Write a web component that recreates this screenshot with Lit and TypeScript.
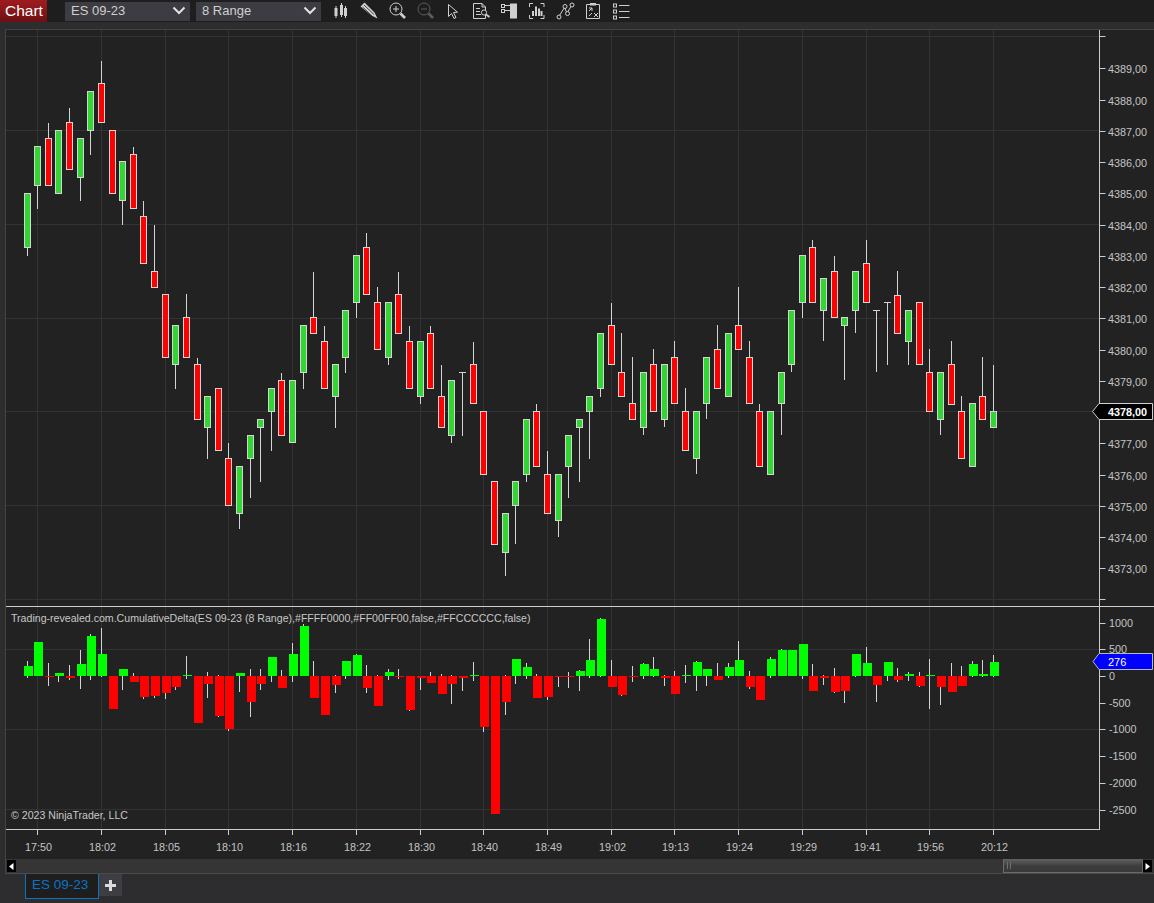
import { LitElement, html, svg, css } from "lit";
import { customElement } from "lit/decorators.js";

// [color, wickTop, bodyTop, bodyBottom, wickBottom]  0 = no wick
type C = [string, number, number, number, number];
const G = "g", R = "r";
const candles: C[] = [
  [G,0,193,247,256],[G,0,146,185,209],[R,123,138,185,0],[G,0,130,193,0],[R,108,122,169,0],[G,0,138,177,201],[G,0,91,130,155],[R,61,83,122,0],
  [R,0,130,193,0],[G,0,161,200,225],[R,147,154,208,0],[R,201,216,263,0],[R,225,271,287,0],[R,0,294,357,0],[G,0,325,364,389],[R,294,317,357,0],
  [R,358,364,419,0],[G,0,396,427,459],[R,0,388,450,0],[R,443,458,505,0],[G,0,466,513,529],[G,0,435,458,498],[G,0,419,427,482],[G,0,388,411,451],
  [R,373,380,435,0],[G,0,380,442,0],[G,0,325,372,389],[R,272,317,333,0],[R,326,341,388,0],[G,0,364,396,428],[G,0,310,357,373],[G,0,255,302,318],
  [R,233,247,294,0],[R,287,302,349,0],[G,0,302,357,365],[R,272,294,333,0],[R,326,341,388,0],[G,0,341,396,404],[R,326,333,388,0],[R,365,396,427,0],
  [G,0,380,435,443],[G,0,372,372,436],[R,342,364,403,0],[R,0,411,474,0],[R,0,481,544,0],[G,0,513,552,576],[G,0,481,505,544],[G,0,419,474,482],
  [R,404,411,466,0],[R,451,474,513,0],[G,0,474,520,537],[G,0,435,466,498],[G,0,419,427,482],[G,0,396,411,459],[G,0,333,388,397],[R,303,325,364,0],
  [R,333,372,396,0],[R,357,403,419,0],[G,0,372,427,435],[R,349,364,411,0],[G,0,364,419,427],[R,341,357,403,0],[R,388,411,450,0],[G,0,411,458,474],
  [G,0,357,403,419],[R,325,349,388,0],[G,0,333,396,0],[R,287,325,349,0],[R,341,357,403,0],[R,404,411,466,0],[G,0,411,474,0],[G,0,372,403,435],
  [G,0,310,364,372],[G,0,255,302,318],[R,240,247,302,0],[G,0,278,310,341],[R,256,271,317,0],[G,0,317,325,380],[G,0,271,310,333],[R,240,263,302,0],
  [G,0,310,310,372],[G,0,302,302,365],[R,271,295,333,0],[G,0,310,341,365],[R,0,302,364,0],[R,349,372,411,0],[G,0,372,419,435],[R,341,364,404,0],
  [R,396,411,458,0],[G,0,403,466,0],[R,357,396,419,0],[G,365,411,427,0],
];

// [barEnd y, wickTop, wickBottom]; color follows side of the zero line
type D = [number, number, number];
const deltas: D[] = [
  [666,661,678],[642,0,0],[677,663,686],[673,0,682],[678,665,680],[664,650,689],[636,634,680],[654,628,677],
  [709,0,0],[669,0,690],[682,673,0],[697,0,699],[696,0,698],[693,0,699],[687,0,690],[675,656,679],
  [723,0,0],[684,672,698],[716,675,717],[729,0,731],[673,0,692],[702,669,717],[684,669,690],[657,0,682],
  [688,670,0],[654,643,682],[626,624,0],[698,661,0],[715,0,0],[685,675,693],[661,0,679],[655,654,0],
  [688,665,693],[706,675,0],[672,669,680],[677,669,679],[710,0,711],[678,0,690],[683,672,0],[694,674,0],
  [684,675,704],[678,0,691],[675,662,681],[727,0,732],[814,0,0],[702,675,715],[659,0,684],[667,663,679],
  [698,674,0],[697,0,700],[677,0,687],[677,672,688],[671,670,691],[660,639,678],[619,618,677],[687,660,0],
  [695,0,696],[677,666,682],[664,663,679],[669,657,677],[678,675,686],[694,671,0],[675,665,683],[662,661,691],
  [669,0,686],[680,663,0],[667,663,678],[660,641,0],[687,671,689],[700,0,0],[659,657,678],[650,649,0],
  [650,0,0],[644,0,679],[691,664,0],[678,675,685],[692,668,693],[691,0,703],[654,0,677],[663,647,0],
  [685,0,702],[662,0,681],[680,668,682],[674,672,681],[686,672,687],[675,659,709],[687,0,705],[692,663,0],
  [686,666,0],[664,661,677],[674,660,677],[662,655,677],
];

const left = (i: number) => Math.round(23.6 + 10.62 * i);
const Z = 676;
const hGridPrice = [36, 130, 224, 318, 411, 505, 599];
const hGridDelta = [649, 729, 809];
const times = ["17:50","18:02","18:05","18:10","18:16","18:22","18:30","18:40","18:49","19:02","19:13","19:24","19:29","19:41","19:56","20:12"];
const gridXs = times.map((_, k) => left(1 + 6 * k) + 3);
const priceLabels = Array.from({ length: 17 }, (_, k) => 4389 - k);
const priceY = (p: number) => Math.round(37 + (4390 - p) * 31.25);
const deltaLabels = [1000, 500, 0, -500, -1000, -1500, -2000, -2500];
const deltaY = (v: number) => Math.round(676 - v * 0.05347);

const vgrid = (y1: number, y2: number) =>
  gridXs.map((x) => svg`<line class="grid" x1=${x + 0.5} x2=${x + 0.5} y1=${y1} y2=${y2}></line>`);
const hgrid = (ys: number[]) =>
  ys.map((y) => svg`<line class="grid" x1="6" x2="1099" y1=${y + 0.5} y2=${y + 0.5}></line>`);

const icons = [
  svg`<g class="ic"><path d="M5 6v12M10.5 3v14M14.5 6v12"></path><rect class="f" x="3.5" y="8" width="3" height="8"></rect><rect class="f" x="9" y="5" width="3" height="10"></rect><rect class="f" x="13" y="8" width="3" height="8"></rect></g>`,
  svg`<g class="ic"><path class="f" d="M1.5 6.5 5.5 2.5 15.5 12.5 18.5 18.5 12.5 15.5Z"></path><path class="dk" d="M5 5 15 14.5M3.5 7 13 16"></path></g>`,
  svg`<g class="ic"><circle cx="9" cy="9" r="6"></circle><path d="M9 6v6M6 9h6"></path><path class="hd" d="M13.5 13.5 18 18"></path></g>`,
  svg`<g class="ic dim"><circle cx="9" cy="9" r="6"></circle><path d="M6 9h6"></path><path class="hd" d="M13.5 13.5 18 18"></path></g>`,
  svg`<g class="ic"><path d="M5.5 4.5v12l3-3 2.5 5 2-1-2.5-5 4-.3Z"></path></g>`,
  svg`<g class="ic"><path d="M2.5 3.5H11L14.5 7V18.5H2.5ZM11 3.5V7h3.5M5 8.5h4M5 11.5h4M5 14.5h5"></path><circle class="bgc" cx="13" cy="12.5" r="2.6"></circle><path class="hd2" d="M15 14.5 18.5 17"></path></g>`,
  svg`<g class="ic"><rect class="f" x="11" y="3.5" width="7" height="15"></rect><rect x="2.5" y="4.5" width="3" height="3"></rect><rect x="2.5" y="9.5" width="3" height="3"></rect><path d="M5.5 5.5H11M5.5 10.5H11"></path></g>`,
  svg`<g class="ic"><path d="M2.5 7V3.5H6M13.5 3.5H17V7M2.5 15V18.5H6M13.5 18.5H17V15"></path><path class="b2" d="M6 16V11M9 16V6.5M12 16V8.5M14.5 16V11"></path></g>`,
  svg`<g class="ic"><path d="M4.5 15.5 9.5 7.5 12 13 16 6.5"></path><circle class="bgc" cx="4" cy="17" r="2"></circle><circle class="bgc" cx="10" cy="6.5" r="2"></circle><circle class="bgc" cx="12.5" cy="13.5" r="2"></circle><circle class="bgc" cx="17" cy="5" r="2"></circle></g>`,
  svg`<g class="ic"><path d="M7 4.5H3.5V18.5H16.5V4.5H13"></path><rect class="f" x="7" y="3" width="6" height="2.5"></rect><path d="M6 11 9 8M6 8h3v3M11 13l4 4M15 13l-4 4M6 16l3-3"></path></g>`,
  svg`<g class="ic"><rect x="2.5" y="4" width="3" height="3"></rect><rect x="2.5" y="10" width="3" height="3"></rect><rect x="2.5" y="16" width="3" height="3"></rect><path d="M8 5.5H18.5M8 11.5H18.5M8 17.5H18.5"></path></g>`,
];

@customElement("app-root")
export class AppRoot extends LitElement {
  static styles = css`
    :host { display: block; width: 1154px; height: 903px; background: #2d2d30; font-family: "Liberation Sans", Arial, sans-serif; overflow: hidden; }
    .toolbar { display: flex; align-items: center; height: 22px; background: #1e1e1e; }
    .chart-tab { width: 47px; height: 22px; box-sizing: border-box; padding-left: 5px; line-height: 21px; font-size: 15.5px; color: #fff; background: linear-gradient(#9e1c20, #6e1013); }
    .select { display: flex; align-items: center; justify-content: space-between; box-sizing: border-box; width: 125px; height: 19px; padding: 0 4px 1px 6px; margin-right: 6px; background: #3c3c42; color: #cfcfcf; font-size: 13px; }
    .select svg { display: block; }
    .chev { fill: none; stroke: #e2e2e2; stroke-width: 2; }
    .first { margin-left: 18px; }
    .icons { display: flex; }
    .icon { display: block; width: 28px; height: 22px; }
    .ic { fill: none; stroke: #cfcfcf; stroke-width: 1; }
    .ic .f { fill: #cfcfcf; stroke: none; }
    .ic .dk { stroke: #444; }
    .ic .hd { stroke-width: 2.6; }
    .ic .hd2 { stroke-width: 1.8; }
    .ic .b2 { stroke-width: 2; }
    .ic .bgc { fill: #1e1e1e; }
    .ic.dim { stroke: #5c5c5c; }
    .band { height: 7px; }
    .frame { margin-left: 5px; border-left: 1px solid #434343; border-top: 1px solid #434343; background: #222222; }
    .frame svg { display: block; }
    text { font-family: "Liberation Sans", Arial, sans-serif; }
    .grid { stroke: #333333; stroke-width: 1; }
    .axis { stroke: #cdcdcd; stroke-width: 1; fill: none; }
    .lbl { font-size: 10.8px; fill: #c4c4c4; }
    .title { font-size: 10.6px; fill: #c8c8c8; }
    .wick { stroke: #d4d4d4; stroke-width: 1; }
    .cg { fill: #32d632; stroke: #d4d4d4; stroke-width: 1; }
    .cr { fill: #ff0000; stroke: #d4d4d4; stroke-width: 1; }
    .bg { fill: #00ff00; }
    .br { fill: #ff0000; }
    .mark { fill: #000; stroke: #d0d0d0; stroke-width: 1; }
    .markb { fill: #0000ff; stroke: #b8b8b8; stroke-width: 1; }
    .mt { font-size: 10.8px; fill: #fff; font-weight: bold; }
    .mw { font-size: 11px; fill: #fff; }
    .scroll { display: flex; align-items: stretch; box-sizing: border-box; height: 15px; margin-left: 5px; background: #353535; border-left: 1px solid #434343; border-bottom: 1px solid #4a4a4a; padding: 0 2px 0 1px; }
    .arrow { width: 9px; margin: 1px 0; background: #000; display: flex; align-items: center; justify-content: center; }
    .arrow svg { display: block; }
    .spacer { flex: 1; }
    .thumb { width: 140px; box-sizing: border-box; border: 1px solid #6a6a6a; border-top: none; background: linear-gradient(#626262, #3c3c3c 55%, #3a3a3a); display: flex; gap: 2px; padding: 3px 3px; }
    .thumb i { width: 1px; background: #6e6e6e; }
    .tabs { display: flex; align-items: flex-start; padding-left: 25px; }
    .tab { box-sizing: border-box; width: 74px; height: 25px; padding-left: 6px; line-height: 22px; font-size: 13.5px; color: #0a74c4; background: #1e1e1e; border: 1px solid #0a74c4; border-top: none; }
    .plus { width: 23px; height: 22px; background: #3e3e42; display: flex; align-items: center; justify-content: center; }
    .plus svg { display: block; }
  `;

  render() {
    return html`
      <div class="toolbar">
        <div class="chart-tab">Chart</div>
        <div class="select first">ES 09-23${this.chev()}</div>
        <div class="select">8 Range${this.chev()}</div>
        <div class="icons">
          ${icons.map((g) => html`<svg class="icon" viewBox="-4 0 28 22">${g}</svg>`)}
        </div>
      </div>
      <div class="band"></div>
      <div class="frame">
        ${this.pricePanel()}
        ${this.deltaPanel()}
        ${this.timeAxis()}
      </div>
      <div class="scroll">
        <div class="arrow"><svg width="5" height="7"><path d="M4.5 0V7L0 3.5Z" fill="#fff"></path></svg></div>
        <div class="spacer"></div>
        <div class="thumb"><i></i><i></i></div>
        <div class="arrow"><svg width="5" height="7"><path d="M.5 0V7L5 3.5Z" fill="#fff"></path></svg></div>
      </div>
      <div class="tabs">
        <div class="tab">ES 09-23</div>
        <div class="plus"><svg width="11" height="11"><path d="M0 4h11v3H0ZM4 0h3v11H4Z" fill="#dcdcdc"></path></svg></div>
      </div>
    `;
  }

  chev() {
    return html`<svg width="14" height="10"><path class="chev" d="M1.5 1.5 7 7 12.5 1.5"></path></svg>`;
  }

  pricePanel() {
    return html`<svg width="1148" height="577" viewBox="6 30 1148 577">
      ${vgrid(30, 606)}
      ${hgrid(hGridPrice)}
      ${candles.map((c, i) => {
        const x = left(i);
        const body = c[2] === c[3]
          ? svg`<line class="wick" x1=${x} x2=${x + 7} y1=${c[2] + 0.5} y2=${c[2] + 0.5}></line>`
          : svg`<rect class=${c[0] === G ? "cg" : "cr"} x=${x + 0.5} y=${c[2] + 0.5} width="6" height=${c[3] - c[2]}></rect>`;
        return svg`
          ${c[1] ? svg`<line class="wick" x1=${x + 3.5} x2=${x + 3.5} y1=${c[1]} y2=${c[2]}></line>` : ""}
          ${c[4] ? svg`<line class="wick" x1=${x + 3.5} x2=${x + 3.5} y1=${c[3]} y2=${c[4]}></line>` : ""}
          ${body}`;
      })}
      <line class="axis" x1="1099.5" x2="1099.5" y1="30" y2="606"></line>
      <path class="axis" d="M1099.5 36.5h6M1099.5 599.5h6"></path>
      ${priceLabels.map((p) => {
        const y = priceY(p);
        return svg`
          <line class="axis" x1="1099.5" x2="1105.5" y1=${y + 0.5} y2=${y + 0.5}></line>
          ${p === 4378 ? "" : svg`<text class="lbl" x="1108" y=${y + 4.5}>${p},00</text>`}`;
      })}
      <path class="mark" d="M1152.5 403.5H1099L1092.5 411.5 1099 419.5H1152.5Z"></path>
      <text class="mt" x="1108" y="416">4378,00</text>
      <line class="axis" x1="6" x2="1154" y1="606.5" y2="606.5"></line>
    </svg>`;
  }

  deltaPanel() {
    return html`<svg width="1148" height="222" viewBox="6 607 1148 222">
      ${vgrid(607, 829)}
      ${hgrid(hGridDelta)}
      ${deltas.map((d, i) => {
        const x = left(i);
        return d[1] || d[2]
          ? svg`<line class="wick" x1=${x + 3.5} x2=${x + 3.5} y1=${d[1] || Math.min(d[0], Z)} y2=${d[2] || Math.max(d[0], Z)}></line>`
          : "";
      })}
      ${deltas.map((d, i) => {
        const x = left(i);
        const up = d[0] < Z;
        return svg`<rect class=${up ? "bg" : "br"} x=${x} y=${up ? d[0] : Z} width="9" height=${Math.abs(d[0] - Z)}></rect>`;
      })}
      <text class="title" x="11" y="622">Trading-revealed.com.CumulativeDelta(ES 09-23 (8 Range),#FFFF0000,#FF00FF00,false,#FFCCCCCC,false)</text>
      <text class="title" x="11" y="819">© 2023 NinjaTrader, LLC</text>
      <line class="axis" x1="1099.5" x2="1099.5" y1="607" y2="829"></line>
      ${deltaLabels.map((v) => {
        const y = deltaY(v);
        return svg`
          <line class="axis" x1="1099.5" x2="1105.5" y1=${y + 0.5} y2=${y + 0.5}></line>
          <text class="lbl" x="1109" y=${y + 4}>${v}</text>`;
      })}
      <path class="markb" d="M1152.5 653.5H1099L1093 661.5 1099 669.5H1152.5Z"></path>
      <text class="mw" x="1108" y="666">276</text>
    </svg>`;
  }

  timeAxis() {
    return html`<svg width="1148" height="30" viewBox="6 829 1148 30">
      <line class="axis" x1="6" x2="1100" y1="829.5" y2="829.5"></line>
      ${gridXs.map(
        (x, k) => svg`
          <line class="axis" x1=${x + 0.5} x2=${x + 0.5} y1="829" y2="835"></line>
          <text class="lbl" text-anchor="middle" x=${x + 1.5} y="851">${times[k]}</text>`
      )}
    </svg>`;
  }
}
